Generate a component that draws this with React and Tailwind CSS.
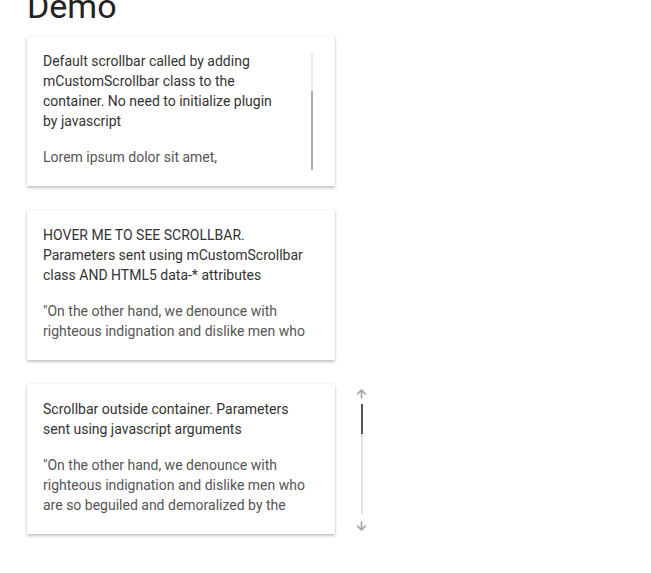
import React from "react";

const font = { fontFamily: "Roboto, 'Noto Sans', Arial, sans-serif" };

const lorem =
  "Lorem ipsum dolor sit amet, consectetur adipiscing elit, sed do eiusmod tempor incididunt ut labore et dolore magna aliqua.";
const onTheOther =
  "\"On the other hand, we denounce with righteous indignation and dislike men who are so beguiled and demoralized by the charms of pleasure of the moment, so blinded by desire, that they cannot foresee the pain and trouble that are bound to ensue.";

function Arrow({ down }) {
  return (
    <svg width="11" height="10" viewBox="0 0 11 10" className={down ? "rotate-180" : ""}>
      <path d="M5.5 9.5V1.2M1.2 5.3l4.3-4.3 4.3 4.3" fill="none" stroke="#a8a8a8" strokeWidth="1.7" />
    </svg>
  );
}

function Card({ children }) {
  return (
    <div className="w-[308px] h-[150px] shrink-0 bg-white p-4 shadow-[0_2px_3px_rgba(0,0,0,0.22),0_0_2px_rgba(0,0,0,0.1)]">
      {children}
    </div>
  );
}

function Text({ title, body, width }) {
  return (
    <div className={width}>
      <p className="text-[14px] leading-[20px] text-[#333]">{title}</p>
      <p className="mt-4 text-[14px] leading-[20px] text-[#555]">{body}</p>
    </div>
  );
}

export default function App() {
  return (
    <div className="min-h-[573px] bg-white pl-[27px]" style={font}>
      <h1 className="-mt-[11px] text-[34px] leading-[34px] font-normal text-[#222]">Demo</h1>

      <div className="mt-[13px] flex flex-col gap-6">
        {/* default scrollbar */}
        <Card>
          <div className="flex h-[118px] overflow-hidden">
            <Text
              width="w-[246px] -mt-px"
              title="Default scrollbar called by adding mCustomScrollbar class to the container. No need to initialize plugin by javascript"
              body={lorem}
            />
            <div className="ml-[22px] flex h-full w-[2px] flex-col bg-[#ececec]">
              <div className="h-[39px]" />
              <div className="flex-1 bg-[#ababab]" />
            </div>
          </div>
        </Card>

        {/* hover scrollbar */}
        <Card>
          <div className="h-[118px] overflow-hidden">
            <Text
              width="w-[276px] -mt-px"
              title="HOVER ME TO SEE SCROLLBAR. Parameters sent using mCustomScrollbar class AND HTML5 data-* attributes"
              body={onTheOther}
            />
          </div>
        </Card>

        {/* outside scrollbar */}
        <div className="flex">
          <Card>
            <div className="h-[118px] overflow-hidden">
              <Text
                width="w-[270px] -mt-px"
                title="Scrollbar outside container. Parameters sent using javascript arguments"
                body={onTheOther}
              />
            </div>
          </Card>
          <div className="ml-[21px] flex w-[11px] flex-col items-center pt-[5px]">
            <Arrow />
            <div className="mt-[5px] flex h-[110px] w-[2px] flex-col bg-[#e0e0e0]">
              <div className="h-[30px] bg-[#555]" />
            </div>
            <div className="mt-[7px]">
              <Arrow down />
            </div>
          </div>
        </div>
      </div>
    </div>
  );
}
